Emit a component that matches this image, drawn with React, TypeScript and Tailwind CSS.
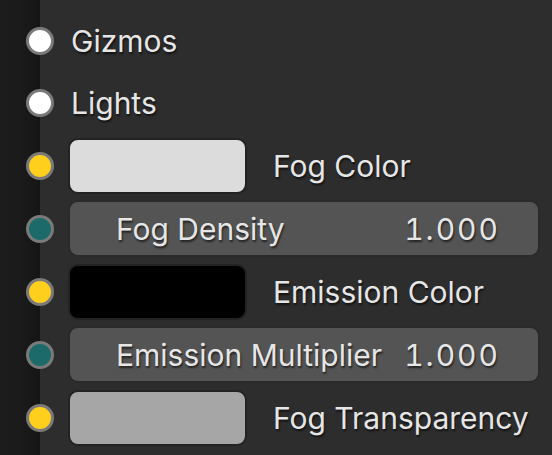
import React from "react";

const font = { fontFamily: "Inter, 'Noto Sans', sans-serif" };

function Socket({ color }: { color: string }) {
  return (
    <div className="absolute left-[26px] top-1/2 -translate-y-1/2 w-[28px] h-[28px] rounded-full border-[3px] border-[#7a7a7a]" style={{ background: color }} />
  );
}

function Row({ children, color, short }: { children: React.ReactNode; color: string; short?: boolean }) {
  return (
    <div className={`relative ${short ? "h-[62px]" : "h-[63px]"} flex items-center pl-[68px] pr-[12px]`}>
      <Socket color={color} />
      {children}
    </div>
  );
}

const txt = "text-[30px] text-[#e6e6e6] [text-shadow:1px_2px_2px_rgba(0,0,0,0.6)] leading-none";

function ColorRow({ swatch, label }: { swatch: string; label: string }) {
  return (
    <Row color="#ffcf1e">
      <div className="w-[179px] h-[56px] rounded-[10px] border-2 border-[#232323]" style={{ background: swatch }} />
      <div className={`${txt} ml-[26px]`}>{label}</div>
    </Row>
  );
}

function NumRow({ label }: { label: string }) {
  return (
    <Row color="#1c6b6a">
      <div className="flex-1 h-[57px] rounded-[10px] bg-[#545454] border-2 border-[#2a2a2a] flex items-center pl-[46px] pr-[40px] justify-between">
        <span className={txt}>{label}</span>
        <span className={`${txt} tabular-nums tracking-[2px] -mr-[2px]`}>1.000</span>
      </div>
    </Row>
  );
}

export default function App() {
  return (
    <div className="relative w-[552px] h-[455px] flex overflow-hidden bg-[#2d2d2d]" style={font}>
      <div className="w-[40px] h-full bg-gradient-to-r from-[#1d1d1d] via-[#1b1b1b] to-[#151515] shrink-0" />
      <div className="flex-1" />
      <div className="absolute left-0 top-[10px] w-[552px]">
        <Row color="#ffffff" short><div className={`${txt} ml-[3px]`}>Gizmos</div></Row>
        <Row color="#ffffff" short><div className={`${txt} ml-[3px]`}>Lights</div></Row>
        <ColorRow swatch="#dcdcdc" label="Fog Color" />
        <NumRow label="Fog Density" />
        <ColorRow swatch="#000000" label="Emission Color" />
        <NumRow label="Emission Multiplier" />
        <ColorRow swatch="#a6a6a6" label="Fog Transparency" />
      </div>
    </div>
  );
}
